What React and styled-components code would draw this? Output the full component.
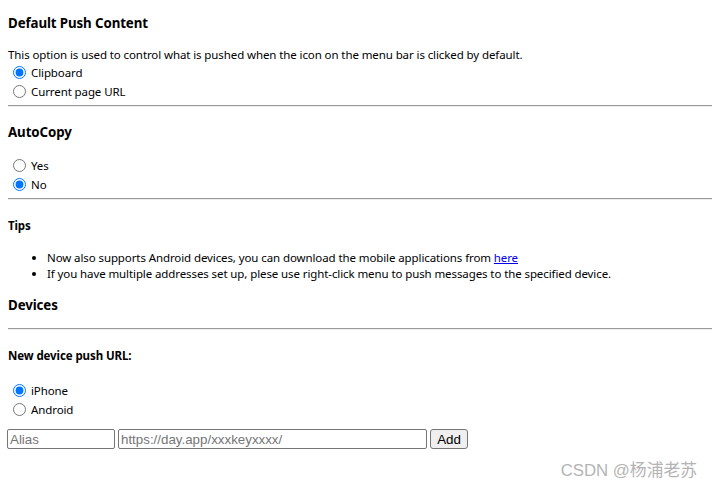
import React from "react";
import styled, { createGlobalStyle } from "styled-components";

const Global = createGlobalStyle`
  html, body { margin: 0; padding: 0; background: #fff; }
  body { font-family: "Noto Sans", "Open Sans", sans-serif; color: #000; }
`;

const Page = styled.div`
  position: relative;
  width: 712px;
  height: 487px;
  overflow: hidden;
  padding-left: 8px;
  box-sizing: border-box;
`;

const Heading = styled.div`
  font-size: ${(p) => (p.$small ? "11.5px" : "13.3px")};
  letter-spacing: -0.1px;
  font-weight: 700;
  line-height: ${(p) => (p.$small ? "16px" : "18px")};
  margin-top: ${(p) => p.$mt}px;
`;

const Desc = styled.div`
  font-size: 11.5px;
  letter-spacing: -0.1px;
  line-height: 16px;
  margin-top: ${(p) => p.$mt}px;
`;

const RadioGroup = styled.div`
  display: flex;
  flex-direction: column;
  margin-top: ${(p) => p.$mt}px;
`;

const RadioRow = styled.label`
  display: flex;
  align-items: center;
  height: 19px;
  font-size: 11.5px;
  letter-spacing: -0.1px;
  input {
    margin: 0 5px 0 5px;
    width: 13px;
    height: 13px;
  }
`;

const Rule = styled.hr`
  margin: ${(p) => p.$mt}px 0 0 0;
  border: 0;
  border-top: 1px solid #9a9a9a;
  border-bottom: 1px solid #eeeeee;
  height: 0;
`;

const List = styled.ul`
  margin: ${(p) => p.$mt}px 0 0 0;
  padding-left: 39px;
  font-size: 11.5px;
  letter-spacing: -0.1px;
  line-height: 15.5px;
  a { color: #0000ee; text-decoration: underline; }
`;

const InputRow = styled.div`
  display: flex;
  gap: 3px;
  margin-top: ${(p) => p.$mt}px;
  margin-left: -1px;
`;

const TextInput = styled.input`
  box-sizing: border-box;
  width: ${(p) => p.$w}px;
  height: 20px;
  border: 1px solid #767676;
  border-radius: 2px;
  padding: 1px 2px;
  font-family: "Liberation Sans", Arial, sans-serif;
  font-size: 13.33px;
  &::placeholder { color: #757575; }
`;

const Button = styled.button`
  box-sizing: border-box;
  width: 38px;
  height: 20px;
  border: 1px solid #767676;
  border-radius: 3px;
  background: #efefef;
  font-family: "Liberation Sans", Arial, sans-serif;
  font-size: 13.33px;
  padding: 0;
  color: #000;
`;

const Watermark = styled.div`
  position: absolute;
  right: 15px;
  top: 461px;
  font-family: "Liberation Sans", "Noto Sans CJK SC", sans-serif;
  font-size: 16.8px;
  line-height: 20px;
  color: #b4b4b4;
`;

export default function App() {
  return (
    <Page>
      <Global />
      <Heading $mt={14}>Default Push Content</Heading>
      <Desc $mt={15}>
        This option is used to control what is pushed when the icon on the menu bar is clicked by default.
      </Desc>
      <RadioGroup $mt={0}>
        <RadioRow><input type="radio" name="push" defaultChecked />Clipboard</RadioRow>
        <RadioRow><input type="radio" name="push" />Current page URL</RadioRow>
      </RadioGroup>
      <Rule $mt={4} />
      <Heading $mt={16}>AutoCopy</Heading>
      <RadioGroup $mt={15}>
        <RadioRow><input type="radio" name="auto" />Yes</RadioRow>
        <RadioRow><input type="radio" name="auto" defaultChecked />No</RadioRow>
      </RadioGroup>
      <Rule $mt={4} />
      <Heading $small $mt={18}>Tips</Heading>
      <List $mt={16}>
        <li>
          Now also supports Android devices, you can download the mobile applications from <a href="#">here</a>
        </li>
        <li>If you have multiple addresses set up, plese use right-click menu to push messages to the specified device.</li>
      </List>
      <Heading $mt={15}>Devices</Heading>
      <Rule $mt={14} />
      <Heading $small $mt={18}>New device push URL:</Heading>
      <RadioGroup $mt={17}>
        <RadioRow><input type="radio" name="dev" defaultChecked />iPhone</RadioRow>
        <RadioRow><input type="radio" name="dev" />Android</RadioRow>
      </RadioGroup>
      <InputRow $mt={10}>
        <TextInput $w={108} placeholder="Alias" />
        <TextInput $w={309} placeholder="https://day.app/xxxkeyxxxx/" />
        <Button>Add</Button>
      </InputRow>
      <Watermark>CSDN @杨浦老苏</Watermark>
    </Page>
  );
}
